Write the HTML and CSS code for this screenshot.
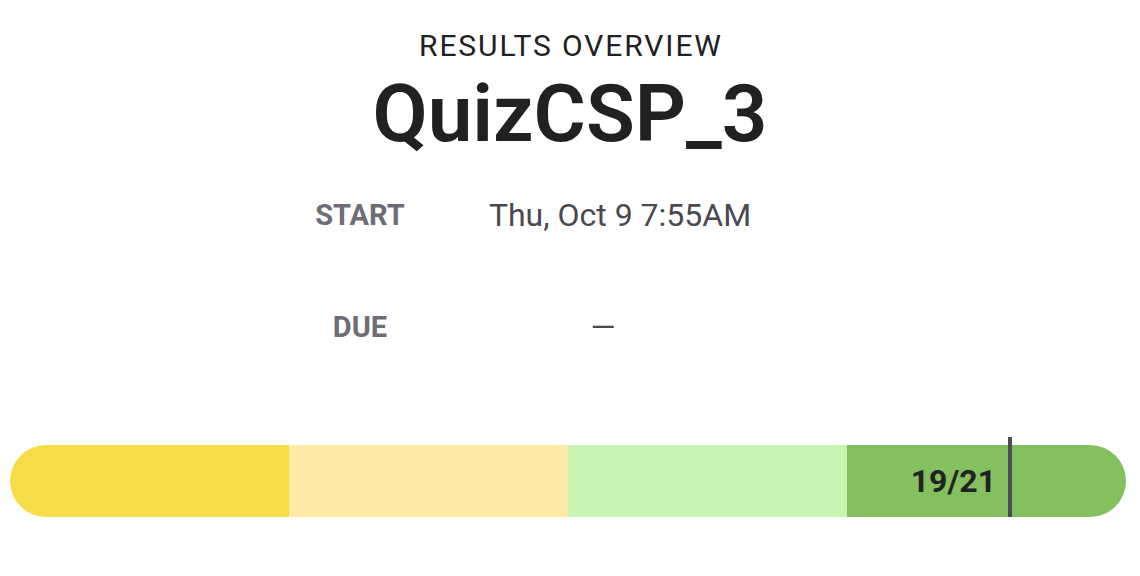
FILE: index.html
```html
<!DOCTYPE html>
<html>
<head>
<meta charset="utf-8">
<link rel="stylesheet" href="styles.css">
</head>
<body>
<main class="overview">
  <header class="head">
    <div class="eyebrow">RESULTS OVERVIEW</div>
    <h1 class="title">QuizCSP_3</h1>
  </header>
  <dl class="meta">
    <dt class="label">START</dt>
    <dd class="value">Thu, Oct 9 7:55AM</dd>
    <dt class="label">DUE</dt>
    <dd class="value"><span class="dash">—</span></dd>
  </dl>
  <div class="bar">
    <div class="track">
      <div class="seg seg1"></div>
      <div class="seg seg2"></div>
      <div class="seg seg3"></div>
      <div class="seg seg4"></div>
    </div>
    <div class="marker">
      <span class="score">19/21</span>
      <span class="tick"></span>
    </div>
  </div>
</main>
</body>
</html>
```
FILE: styles.css
```css
html, body {
  margin: 0;
  padding: 0;
  background: #ffffff;
}
body {
  font-family: Roboto, "Liberation Sans", sans-serif;
  color: #212121;
}
.overview {
  display: flex;
  flex-direction: column;
  align-items: stretch;
}
.head {
  display: flex;
  flex-direction: column;
  align-items: center;
  padding-top: 26px;
}
.eyebrow {
  font-size: 30px;
  line-height: 40px;
  font-weight: 400;
  letter-spacing: 1.9px;
  margin-right: -1.9px;
  color: #212121;
}
.title {
  margin: 0;
  font-size: 80px;
  line-height: 96px;
  font-weight: 600;
  color: #212121;
}
.meta {
  margin: 33px auto 0;
  display: grid;
  grid-template-columns: 100px 420px;
  grid-auto-rows: 112px;
  width: 520px;
}
.label {
  text-align: center;
  font-size: 29px;
  font-weight: 700;
  color: #6e6d75;
  line-height: 40px;
}
.value {
  margin: 0;
  text-align: center;
  font-size: 32px;
  font-weight: 400;
  color: #4a4950;
  line-height: 40px;
}
.dash {
  display: inline-block;
  margin-right: 34px;
}
.bar {
  position: relative;
  margin: 26px 14px 0 10px;
}
.track {
  display: flex;
  height: 72px;
  border-radius: 36px;
  overflow: hidden;
}
.seg { flex: 1; }
.seg1 { background: #f7dc4a; }
.seg2 { background: #fdeaa6; }
.seg3 { background: #c9f4b3; }
.seg4 { background: #84c05e; }
.marker {
  position: absolute;
  top: -8px;
  bottom: -8px;
  left: 998px;
  width: 4px;
}
.tick {
  position: absolute;
  inset: 0;
  background: #4d4c55;
}
.score {
  position: absolute;
  right: 16px;
  top: 50%;
  transform: translateY(-50%);
  font-size: 32px;
  font-weight: 700;
  color: #222222;
  white-space: nowrap;
}
```
